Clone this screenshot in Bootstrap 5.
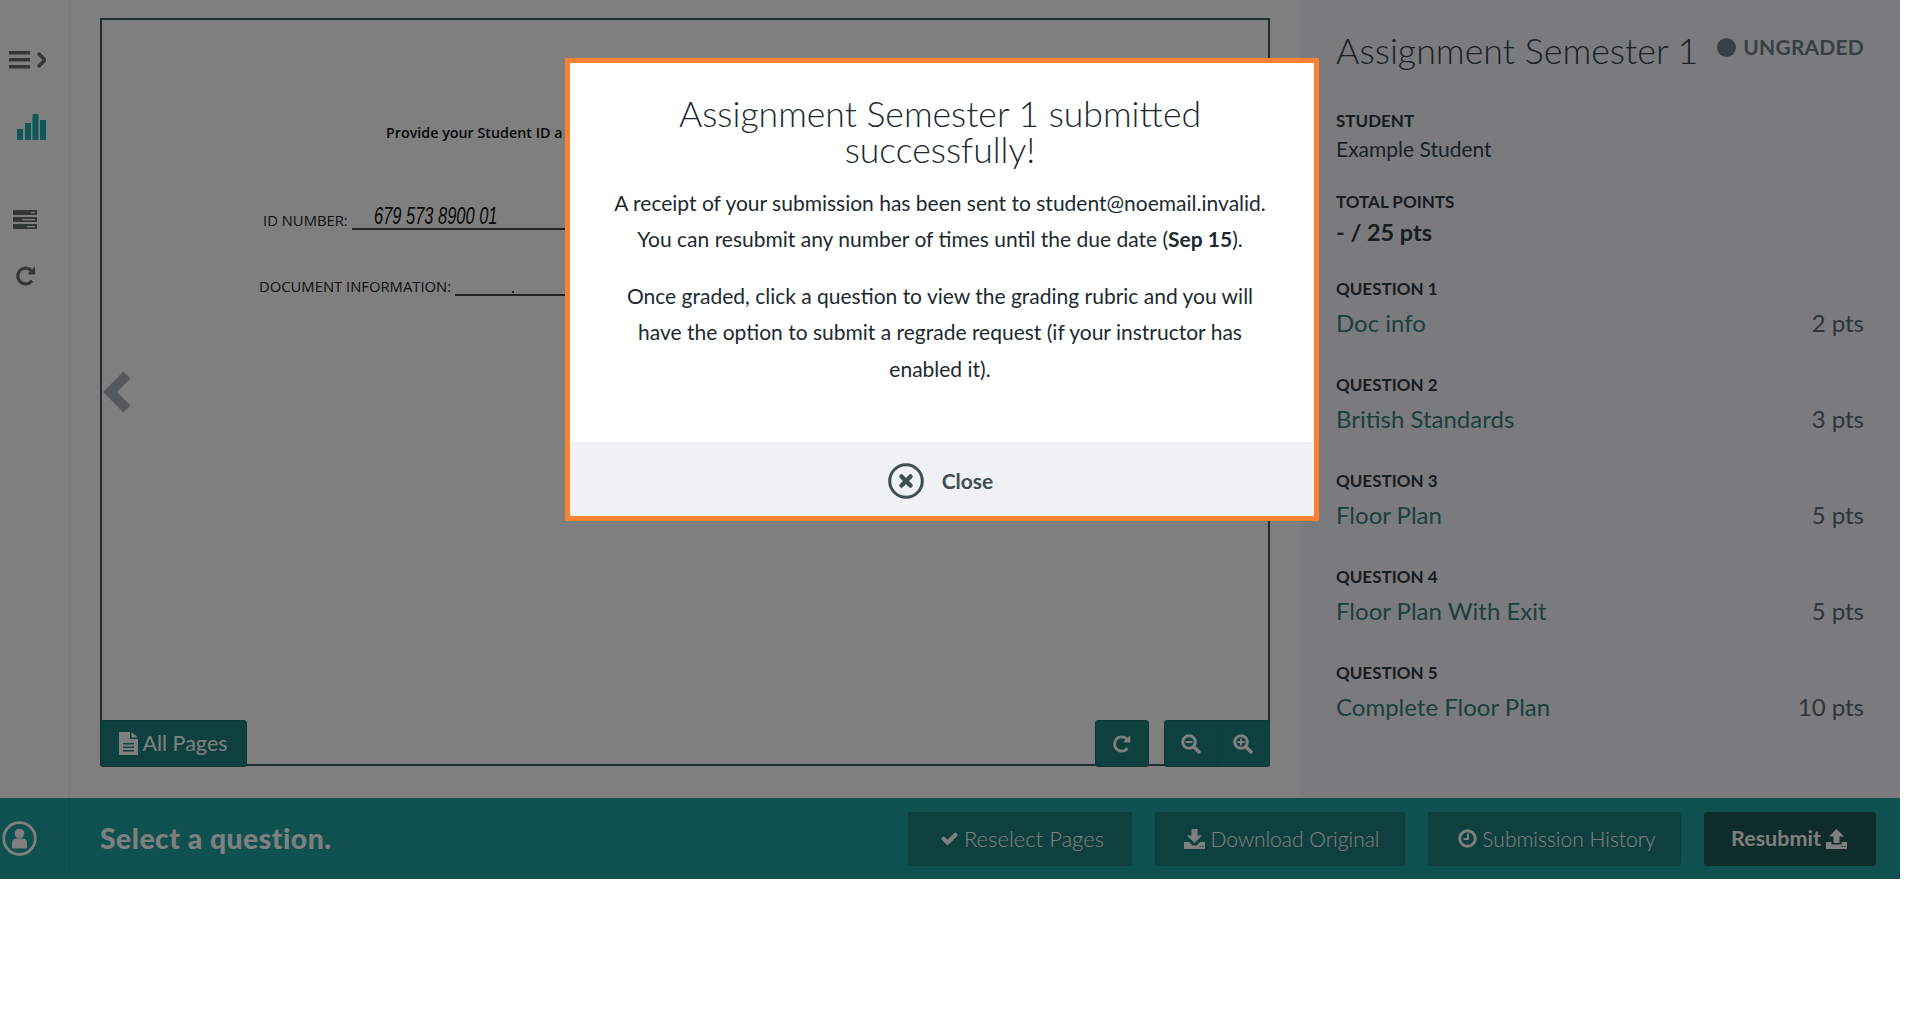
<!DOCTYPE html>
<html lang="en">
<head>
    <meta charset="UTF-8">
    <meta name="viewport" content="width=device-width, initial-scale=1.0">
    <title>Assignment Semester 1</title>

    <!-- Bootstrap CSS -->
    <link href="https://cdn.jsdelivr.net/npm/bootstrap@5.3.0/dist/css/bootstrap.min.css" rel="stylesheet">

    <!-- Custom Styles -->
    <style>
        body {
            background-color: #fff;
            font-family: "Lato", "Liberation Sans", sans-serif;
            color: #34444c;
        }
        .app-shell {
            width: 1900px;
            height: 879px;
            overflow: hidden;
        }
        .app-main {
            height: 798px;
        }
        .side-rail {
            width: 70px;
            flex: none;
            background-color: #fff;
            border-right: 1px solid #eee;
            position: relative;
        }
        .rail-menu { width: 37px; height: 18px; margin: 51px 0 0 9px; }
        .rail-chart { width: 29px; height: 26px; margin: 45px 0 0 17px; }
        .rail-stack { width: 24px; height: 19px; margin: 70px 0 0 13px; }
        .rail-redo { width: 22px; height: 22px; margin: 36px 0 0 15px; }
        .viewer-pane {
            width: 1230px;
            flex: none;
            padding: 18px 30px 0;
            background-color: #fff;
        }
        .doc-frame {
            height: 748px;
            border: 2px solid #445a5e;
            position: relative;
        }
        .doc-page {
            height: 100%;
            color: #222;
            font-family: "Open Sans", sans-serif;
            font-size: 14.8px;
            white-space: nowrap;
        }
        .doc-head { margin: 103px 0 0 284px; font-size: 14.3px; font-weight: 600; height: 20px; line-height: 20px; color: #111; }
        .doc-id { margin: 54px 0 0 161px; align-items: flex-end; height: 33px; }
        .doc-id > span:first-child { margin-bottom: -1.5px; }
        .doc-info { margin: 36px 0 0 157px; align-items: flex-end; height: 30px; }
        .doc-info > span:first-child { margin-bottom: -1.5px; }
        .doc-rule { border-bottom: 2px solid #444; height: 30px; margin-left: 4px; flex: 1; position: relative; }
        .doc-hand {
            font-family: "Liberation Sans", sans-serif;
            font-style: italic;
            font-size: 23.5px;
            margin: 3px 0 0 22px;
            line-height: 26px;
            display: block;
            color: #111;
            transform: scaleX(.7);
            transform-origin: left center;
        }
        .doc-dot {
            position: absolute;
            left: 57px;
            bottom: 1px;
            width: 2px;
            height: 2px;
            background-color: #333;
        }
        .doc-arrow {
            position: absolute;
            left: 1px;
            top: 351px;
            width: 28px;
            height: 42px;
        }
        .tool-btn {
            background-color: #1e8080;
            border: 1px solid #1a7070;
            color: #fff;
            height: 47px;
            font-size: 21.5px;
            border-radius: 3px;
            display: flex;
            align-items: center;
            justify-content: center;
            padding: 0;
        }
        .tool-left { position: absolute; left: -2px; bottom: -3px; width: 147px; gap: 4px; }
        .tool-right { position: absolute; right: -2px; bottom: -3px; gap: 15px; }
        .tool-square { width: 54px; }
        .tool-zoom { width: 53.5px; }
        .btn-group .tool-zoom:first-child { border-right-color: #176868; }
        .info-panel {
            flex: 1;
            background-color: #f6f6fa;
            padding: 0 36px;
        }
        .panel-title {
            font-size: 35.8px;
            font-weight: 300;
            line-height: 42px;
            color: #34444c;
            margin: 30px 0 0;
        }
        .status-dot {
            width: 19px;
            height: 19px;
            border-radius: 50%;
            background-color: #6e8088;
            margin-right: 7px;
        }
        .status-text { font-size: 21px; font-weight: 700; color: #6e8088; letter-spacing: .2px; }
        .status-line { margin-top: 37px; height: 20px; }
        .field-label {
            font-size: 17px;
            font-weight: 700;
            line-height: 20px;
            color: #2e3a40;
            text-transform: uppercase;
        }
        .field-student { margin-top: 39px; }
        .field-points { margin-top: 28px; }
        .field-value { font-size: 21px; line-height: 31px; color: #34444c; margin-top: 2px; }
        .field-total { font-size: 23.4px; font-weight: 700; line-height: 40px; color: #2e3a40; margin-bottom: 27px; }
        .q-item { height: 96px; }
        .q-row { margin-top: 6px; }
        .q-link { color: #35827d; font-size: 24px; text-decoration: none; line-height: 36px; }
        .q-pts { color: #5e6a70; font-size: 24px; line-height: 36px; }
        .action-bar {
            height: 81px;
            background-color: #1ea0a2;
        }
        .bar-user {
            width: 70px;
            height: 100%;
            flex: none;
            border-right: 1px solid #1c9698;
            padding-left: 2px;
        }
        .bar-prompt {
            font-size: 28.3px;
            font-weight: 900;
            color: #fff;
            margin-left: 30px;
            letter-spacing: .5px;
        }
        .bar-btn {
            height: 54px;
            background-color: #1e8080;
            border: 1px solid #1d7a7a;
            color: #fff;
            font-size: 21px;
            font-weight: 300;
            border-radius: 3px;
            display: flex;
            align-items: center;
            justify-content: center;
            gap: 5px;
            padding: 0;
        }
        .bar-reselect { width: 224px; margin-right: 23px; font-size: 22px; padding-left: 4px; }
        .bar-download { width: 250px; margin-right: 23px; padding-left: 4px; }
        .bar-history { width: 253px; margin-right: 23px; padding-left: 5px; }
        .bar-resubmit {
            width: 172px;
            margin-right: 24px;
            background-color: #1a5854;
            border-color: #1a5854;
            font-size: 21.5px;
            font-weight: 700;
            padding-right: 2px;
        }
        .dim-layer {
            position: absolute;
            inset: 0;
            background-color: rgba(0, 0, 0, .5);
        }
        .notice-box {
            position: absolute;
            left: 565px;
            top: 58px;
            width: 754px;
            height: 463px;
            background-color: #fff;
            border: 5px solid #fb8232;
        }
        .notice-title {
            font-size: 35.6px;
            font-weight: 300;
            line-height: 36px;
            margin: 33px 24px 0 20px;
            color: #1c2a30;
        }
        .notice-body {
            padding: 16.5px 4px 0 0;
        }
        .notice-text {
            font-size: 21px;
            line-height: 36.5px;
            color: #1c2a30;
            margin: 0 auto;
            width: 720px;
        }
        .notice-wrap { width: 640px; }
        .notice-gap { margin-bottom: 20px; }
        .notice-foot {
            height: 74px;
            background-color: #eff1f5;
            border: 0;
            gap: 18px;
            color: #3f4f53;
            font-size: 21px;
            font-weight: 700;
            padding: 4px 3px 0 0;
        }
        .notice-foot:hover { background-color: #eff1f5; color: #3f4f53; }
    </style>
</head>
<body>
    <div class="app-shell d-flex flex-column position-relative">
        <div class="app-main d-flex">
            <!-- Left tool rail -->
            <aside class="side-rail d-flex flex-column">
                <svg class="rail-menu" viewBox="0 0 37 18"><path fill="#666e70" d="M0 0h21v3.5H0zM0 7h21v3.5H0zM0 14h21v3.5H0z"/><path fill="none" stroke="#666e70" stroke-width="3.6" d="M29 2l7 7-7 7"/></svg>
                <svg class="rail-chart" viewBox="0 0 29 26"><path fill="#20b0ae" d="M0 15h6v11H0zM8 9h6v17H8zM15.5 0h6v26h-6zM23 6h6v20h-6z"/></svg>
                <svg class="rail-stack" viewBox="0 0 24 19"><path fill="#666e70" fill-rule="evenodd" d="M0 0h24v5H0zM18 2v1.3h4V2zM0 7h24v5H0zM9 9v1.3h13V9zM0 14h24v5H0zM14 16v1.3h8V16z"/></svg>
                <svg class="rail-redo" viewBox="0 0 1792 1792"><path fill="#666e70" d="M1639 256v448q0 26-19 45t-45 19h-448q-42 0-59-40-17-39 14-69l138-138q-148-137-349-137-104 0-198.5 40.5t-163.5 109.5-109.5 163.5-40.5 198.5 40.5 198.5 109.5 163.5 163.5 109.5 198.5 40.5q119 0 225-52t179-147q7-10 23-12 15 0 25 9l137 138q9 8 9.5 20.5t-7.5 22.5q-109 132-264 204.5t-327 72.5q-156 0-298-61t-245-164-164-245-61-298 61-298 164-245 245-164 298-61q147 0 284.5 55.5t244.5 156.5l130-129q29-31 70-14 39 17 39 59z"/></svg>
            </aside>

            <!-- Scanned page viewer -->
            <main class="viewer-pane">
                <div class="doc-frame">
                    <div class="doc-page overflow-hidden">
                        <div class="doc-head">Provide your Student ID a</div>
                        <div class="doc-id d-flex">
                            <span>ID NUMBER:</span>
                            <span class="doc-rule"><span class="doc-hand">679 573 8900 01</span></span>
                        </div>
                        <div class="doc-info d-flex">
                            <span>DOCUMENT INFORMATION:</span>
                            <span class="doc-rule"><span class="doc-dot"></span></span>
                        </div>
                    </div>
                    <svg class="doc-arrow" viewBox="0 0 28 42"><path fill="none" stroke="#aab0b8" stroke-width="10" d="M24 4L7 21l17 17"/></svg>
                    <button type="button" class="btn tool-btn tool-left">
                        <svg width="19" height="23" viewBox="0 0 19 23"><path fill="#fff" fill-rule="evenodd" d="M0 0h11v7h8v16H0zM4 11v1.5h11V11zM4 14.5V16h11v-1.5zM4 18v1.5h11V18zM12.5 0L19 5.5h-6.5z"/></svg>
                        All Pages
                    </button>
                    <div class="tool-right d-flex">
                        <button type="button" class="btn tool-btn tool-square">
                            <svg width="20" height="20" viewBox="0 0 1792 1792"><path fill="#fff" d="M1639 256v448q0 26-19 45t-45 19h-448q-42 0-59-40-17-39 14-69l138-138q-148-137-349-137-104 0-198.5 40.5t-163.5 109.5-109.5 163.5-40.5 198.5 40.5 198.5 109.5 163.5 163.5 109.5 198.5 40.5q119 0 225-52t179-147q7-10 23-12 15 0 25 9l137 138q9 8 9.5 20.5t-7.5 22.5q-109 132-264 204.5t-327 72.5q-156 0-298-61t-245-164-164-245-61-298 61-298 164-245 245-164 298-61q147 0 284.5 55.5t244.5 156.5l130-129q29-31 70-14 39 17 39 59z"/></svg>
                        </button>
                        <div class="btn-group">
                            <button type="button" class="btn tool-btn tool-zoom">
                                <svg width="20" height="20" viewBox="0 0 20 20"><circle cx="8" cy="8" r="6.3" fill="none" stroke="#fff" stroke-width="3"/><path stroke="#fff" stroke-width="3.4" stroke-linecap="round" d="M13 13l5 5"/><path stroke="#fff" stroke-width="2" d="M4.5 8h7"/></svg>
                            </button>
                            <button type="button" class="btn tool-btn tool-zoom">
                                <svg width="20" height="20" viewBox="0 0 20 20"><circle cx="8" cy="8" r="6.3" fill="none" stroke="#fff" stroke-width="3"/><path stroke="#fff" stroke-width="3.4" stroke-linecap="round" d="M13 13l5 5"/><path stroke="#fff" stroke-width="1.8" d="M4.5 8h7M8 4.5v7"/></svg>
                            </button>
                        </div>
                    </div>
                </div>
            </main>

            <!-- Assignment details -->
            <section class="info-panel">
                <div class="d-flex justify-content-between">
                    <h1 class="panel-title text-nowrap">Assignment Semester 1</h1>
                    <div class="status-line d-flex align-items-center">
                        <span class="status-dot"></span>
                        <span class="status-text">UNGRADED</span>
                    </div>
                </div>
                <div class="field-label field-student">Student</div>
                <div class="field-value">Example Student</div>
                <div class="field-label field-points">Total Points</div>
                <div class="field-total">- / 25 pts</div>

                <div id="questionList"></div>
            </section>
        </div>

        <!-- Bottom action bar -->
        <div class="action-bar d-flex align-items-center">
            <div class="bar-user d-flex align-items-center">
                <svg width="35" height="35" viewBox="0 0 35 35"><circle cx="17.5" cy="17.5" r="15.8" fill="none" stroke="#fff" stroke-width="2.8"/><circle cx="17.5" cy="12.5" r="4.8" fill="#fff"/><path fill="#fff" d="M10 26v-4c0-3 2-4.5 4-4.5h7c2 0 4 1.500 4 4.500v4q0 1.500-2 1.500H12q-2 0-2-1.500z"/></svg>
            </div>
            <div class="bar-prompt flex-grow-1">Select a question.</div>
            <button type="button" class="btn bar-btn bar-reselect">
                <svg width="19" height="19" viewBox="0 0 1792 1792"><path fill="#fff" d="M1671 566q0 40-28 68l-724 724-136 136q-28 28-68 28t-68-28l-136-136-362-362q-28-28-28-68t28-68l136-136q28-28 68-28t68 28l294 295 656-657q28-28 68-28t68 28l136 136q28 28 28 68z"/></svg>
                Reselect Pages
            </button>
            <button type="button" class="btn bar-btn bar-download">
                <svg width="21" height="20" viewBox="0 0 21 20"><path fill="#fff" fill-rule="evenodd" d="M7.5 0h6v6.5H18L10.5 14 3 6.5h4.500zM0 13h5l3.5 3.5h4L16 13h5v7H0zM15.5 17v1H17v-1zM18 17v1h1.5v-1z"/></svg>
                Download Original
            </button>
            <button type="button" class="btn bar-btn bar-history">
                <svg width="19" height="19" viewBox="0 0 19 19"><circle cx="9.5" cy="9.5" r="7.8" fill="none" stroke="#fff" stroke-width="3"/><path fill="none" stroke="#fff" stroke-width="2" d="M10 4.5v5.500H5.500"/></svg>
                Submission History
            </button>
            <button type="button" class="btn bar-btn bar-resubmit">
                Resubmit
                <svg width="21" height="20" viewBox="0 0 21 20"><path fill="#fff" fill-rule="evenodd" d="M7.5 14h6V7.5H18L10.5 0 3 7.5h4.5zM0 13h5.5v2.5h10V13H21v7H0zM15.5 17v1H17v-1zM18 17v1h1.5v-1z"/></svg>
            </button>
        </div>

        <div class="dim-layer"></div>

        <!-- Confirmation dialog -->
        <div class="notice-box d-flex flex-column">
            <h2 class="notice-title text-center">Assignment Semester 1 submitted successfully!</h2>
            <div class="notice-body flex-grow-1 text-center">
                <p class="notice-text">A receipt of your submission has been sent to student@noemail.invalid.</p>
                <p class="notice-text notice-gap">You can resubmit any number of times until the due date (<b>Sep 15</b>).</p>
                <p class="notice-text notice-wrap">Once graded, click a question to view the grading rubric and you will have the option to submit a regrade request (if your instructor has enabled it).</p>
            </div>
            <button type="button" class="btn notice-foot d-flex align-items-center justify-content-center w-100 rounded-0">
                <svg width="36" height="36" viewBox="0 0 36 36"><circle cx="18" cy="18" r="16.3" fill="none" stroke="#3f4f53" stroke-width="3"/><path stroke="#3f4f53" stroke-width="4.5" stroke-linecap="round" d="M13.5 13.5l9 9M22.5 13.5l-9 9"/></svg>
                Close
            </button>
        </div>
    </div>

    <!-- Bootstrap JS Bundle with Popper -->
    <script src="https://cdn.jsdelivr.net/npm/bootstrap@5.3.0/dist/js/bootstrap.bundle.min.js"></script>

    <!-- Fill in the question rows -->
    <script>
        const questions = [
            { title: 'Doc info', points: 2 },
            { title: 'British Standards', points: 3 },
            { title: 'Floor Plan', points: 5 },
            { title: 'Floor Plan With Exit', points: 5 },
            { title: 'Complete Floor Plan', points: 10 }
        ];

        document.getElementById('questionList').innerHTML = questions.map((q, i) => `
            <div class="q-item">
                <div class="field-label">Question ${i + 1}</div>
                <div class="q-row d-flex justify-content-between">
                    <a href="#" class="q-link">${q.title}</a>
                    <span class="q-pts">${q.points} pts</span>
                </div>
            </div>`).join('');
    </script>
</body>
</html>
